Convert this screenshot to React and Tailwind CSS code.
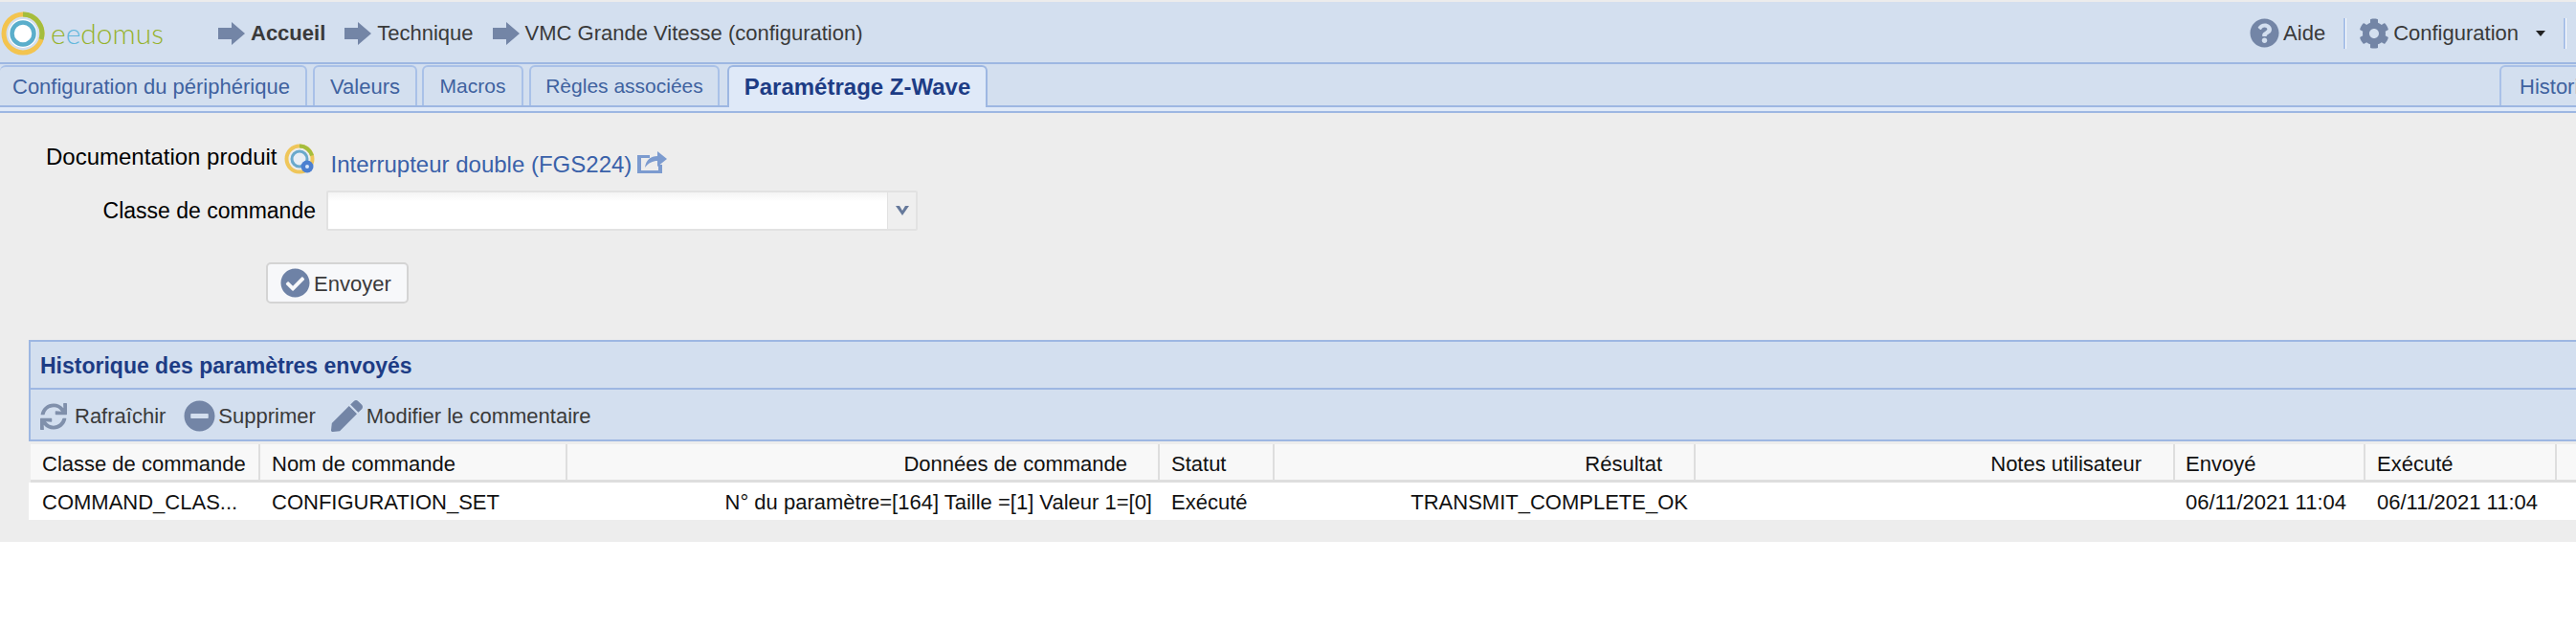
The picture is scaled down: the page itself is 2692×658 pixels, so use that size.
import { FaCheckCircle, FaCog, FaMinusCircle, FaPen, FaQuestionCircle, FaSync } from 'react-icons/fa';

const tabs = [
  { label: 'Configuration du périphérique', className: 'w-[321px] pl-[13px] border-l-0' },
  { label: 'Valeurs', className: 'w-[109px] ml-[6px] justify-center' },
  { label: 'Macros', className: 'w-[106px] ml-[5px] justify-center text-[21px]' },
  { label: 'Règles associées', className: 'w-[199px] ml-[6px] justify-center text-[21px]' },
];

const columns = [
  { head: 'Classe de commande', cell: 'COMMAND_CLAS...', width: 'w-[240px]', headPad: 'pl-[12px]', cellPad: 'pl-[12px]' },
  { head: 'Nom de commande', cell: 'CONFIGURATION_SET', width: 'w-[321px]', headPad: 'pl-[12px]', cellPad: 'pl-[12px]' },
  { head: 'Données de commande', cell: 'N° du paramètre=[164] Taille =[1] Valeur 1=[0]', width: 'w-[619px]', headPad: 'pr-[32px] justify-end', cellPad: 'pr-[8px] justify-end' },
  { head: 'Statut', cell: 'Exécuté', width: 'w-[120px]', headPad: 'pl-[12px]', cellPad: 'pl-[12px]' },
  { head: 'Résultat', cell: 'TRANSMIT_COMPLETE_OK', width: 'w-[440px]', headPad: 'pr-[33px] justify-end', cellPad: 'pr-[8px] justify-end' },
  { head: 'Notes utilisateur', cell: '', width: 'w-[501px]', headPad: 'pr-[33px] justify-end', cellPad: '' },
  { head: 'Envoyé', cell: '06/11/2021 11:04', width: 'w-[199px]', headPad: 'pl-[11px]', cellPad: 'pl-[11px]' },
  { head: 'Exécuté', cell: '06/11/2021 11:04', width: 'w-[200px]', headPad: 'pl-[12px]', cellPad: 'pl-[12px]' },
];

function Arrow() {
  return (
    <svg width="28" height="24" viewBox="0 0 28 24" className="shrink-0">
      <path d="M0 6h14V0l14 12-14 12v-6H0z" fill="#7385a6" />
    </svg>
  );
}

function Logo() {
  return (
    <svg width="46" height="46" viewBox="0 0 46 46" className="shrink-0">
      <circle cx="23" cy="23" r="20" fill="none" stroke="#f3c44f" strokeWidth="5" />
      <path d="M23 3a20 20 0 0 1 19 26" fill="none" stroke="#a4bd3d" strokeWidth="5" />
      <circle cx="23" cy="23" r="15" fill="#ffffff" />
      <circle cx="23" cy="23" r="11.5" fill="none" stroke="#5aaecb" strokeWidth="4.5" />
    </svg>
  );
}

function DocIcon() {
  return (
    <svg width="33" height="33" viewBox="0 0 33 33" className="shrink-0">
      <circle cx="16" cy="16" r="13.5" fill="none" stroke="#efc65a" strokeWidth="4" />
      <path d="M16 2.5a13.5 13.5 0 0 1 13 10" fill="none" stroke="#a4bd3d" strokeWidth="4" />
      <circle cx="16" cy="16" r="8" fill="#e8eef5" stroke="#6aa9cc" strokeWidth="3" />
      <circle cx="24" cy="24" r="6.5" fill="#4c7fd0" />
      <circle cx="24" cy="24" r="2" fill="#dbe7fa" />
    </svg>
  );
}

function ShareIcon() {
  return (
    <svg width="32" height="28" viewBox="0 0 32 28" className="shrink-0">
      <path d="M0 8h13v3H4v13h18v-6h4v9H0z" fill="#7c9bcf" />
      <path d="M8 21c1-8 6-12 13-12V4l10 8-10 8v-6c-5 0-9 2-13 7z" fill="#7c9bcf" />
    </svg>
  );
}

export default function App() {
  return (
    <div className="w-[2692px] h-[658px] overflow-hidden bg-white font-['Liberation_Sans',Arial,sans-serif] text-[22px]">
      {/* top bar */}
      <div className="h-[2px] bg-[#ececec]" />
      <div className="h-[63px] pt-[2px] bg-[#d3dfef] flex items-center text-[#3a3a3a]">
        <div className="flex items-center w-[228px] pl-[1px]">
          <Logo />
          <span className="ml-[6px] font-['Lato',sans-serif] font-light text-[30px] text-[#96b22c]">
            e<span className="text-[#62b7dc]">e</span>domus
          </span>
        </div>
        <Arrow />
        <span className="ml-[6px] font-bold">Accueil</span>
        <div className="ml-[20px]"><Arrow /></div>
        <span className="ml-[6px]">Technique</span>
        <div className="ml-[20px]"><Arrow /></div>
        <span className="ml-[6px]">VMC Grande Vitesse (configuration)</span>

        <div className="ml-auto flex items-center">
          <FaQuestionCircle className="text-[#7385a6] w-[31px] h-[31px]" />
          <span className="ml-[4px]">Aide</span>
          <div className="ml-[19px] w-[3px] h-[32px] bg-[#a9c1e8] border-r border-white" />
          <FaCog className="ml-[13px] text-[#7385a6] w-[32px] h-[32px]" />
          <span className="ml-[4px]">Configuration</span>
          <svg width="10" height="6" viewBox="0 0 10 6" className="ml-[18px]"><path d="M0 0h10L5 6z" fill="#222222" /></svg>
          <div className="ml-[19px] mr-[10px] w-[3px] h-[32px] bg-[#a9c1e8] border-r border-white" />
        </div>
      </div>

      {/* tabs */}
      <div className="h-[45px] bg-[#d3dfef] border-t-2 border-[#9db7e2] flex items-end">
        {tabs.map((tab) => (
          <div
            key={tab.label}
            className={`h-[42px] flex items-center border-t-2 border-x-2 border-[#a9c1e8] rounded-t-[6px] text-[#3f629f] ${tab.className}`}
          >
            {tab.label}
          </div>
        ))}
        <div className="h-[44px] w-[272px] ml-[8px] -mb-[2px] z-10 flex items-center justify-center border-t-2 border-x-2 border-[#9db7e2] rounded-t-[6px] bg-[#dfe9f8] font-bold text-[24px] text-[#1d3c85]">
          Paramétrage Z-Wave
        </div>
        <div className="ml-auto h-[42px] w-[80px] overflow-hidden flex items-center pl-[19px] border-t-2 border-l-2 border-[#a9c1e8] rounded-tl-[6px] text-[#3f629f]">
          Historique
        </div>
      </div>
      <div className="h-[8px] bg-[#dfe9f8] border-y-2 border-[#9db7e2] box-border" />

      {/* form + history */}
      <div className="h-[448px] bg-[#ededed] pt-[32px]">
        <div className="flex items-start h-[32px] pl-[48px] text-black text-[24px]">
          <span className="mt-[1px] leading-[26px]">Documentation produit</span>
          <div className="ml-[8px]"><DocIcon /></div>
          <a className="ml-[15px] mt-[8px] leading-[28px] text-[#3a61a9]">Interrupteur double (FGS224)</a>
          <div className="ml-[6px] mt-[4px]"><ShareIcon /></div>
        </div>

        <div className="flex items-center mt-[17px] h-[42px]">
          <span className="w-[330px] text-right text-black text-[23px]">Classe de commande</span>
          <div className="ml-[11px] w-[618px] h-[42px] flex border-2 border-[#e2e2e2] rounded-[2px]">
            <div className="w-[584px] bg-gradient-to-b from-[#f4f4f4] to-white to-[25%]" />
            <div className="flex-1 bg-[#efefef] flex items-center justify-center border-l border-[#e2e2e2]">
              <svg width="16" height="12" viewBox="0 0 16 12"><path d="M1 1h4l3 5 3-5h4L8 11z" fill="#66799b" /></svg>
            </div>
          </div>
        </div>

        <div className="ml-[278px] mt-[33px] w-[149px] h-[43px] flex items-center pl-[13px] border-2 border-[#d4d4d4] rounded-[5px] bg-[#f7f8fa] text-[#3a3a3a]">
          <FaCheckCircle className="text-[#6e82a6] w-[31px] h-[31px]" />
          <span className="ml-[4px] pt-[2px]">Envoyer</span>
        </div>

        <div className="ml-[30px] mt-[38px]">
          <div className="h-[50px] pt-[3px] bg-[#d3dfef] border-t-2 border-l-2 border-[#9db7e2] flex items-center pl-[10px] font-bold text-[23px] text-[#1d3c85]">
            Historique des paramètres envoyés
          </div>
          <div className="h-[56px] pt-[3px] bg-[#d3dfef] border-y-2 border-l-2 border-[#9db7e2] flex items-center pl-[10px] text-[#3a3a3a]">
            <FaSync className="text-[#8090ab] w-[28px] h-[28px]" />
            <span className="ml-[8px]">Rafraîchir</span>
            <FaMinusCircle className="ml-[19px] text-[#7385a6] w-[33px] h-[33px]" />
            <span className="ml-[3px]">Supprimer</span>
            <FaPen className="ml-[16px] text-[#7385a6] w-[33px] h-[33px]" />
            <span className="ml-[4px]">Modifier le commentaire</span>
          </div>

          <div className="flex h-[43px] pt-[3px] bg-[#ededed] pl-[2px]">
            {columns.map((col) => (
              <div
                key={col.head}
                className={`h-[40px] pt-[3px] flex items-center bg-[#f8f8f8] border-b-[3px] border-r-2 border-[#dedede] text-[#111111] ${col.width} ${col.headPad}`}
              >
                {col.head}
              </div>
            ))}
            <div className="h-[40px] flex-1 bg-[#f8f8f8] border-b-[3px] border-[#dedede]" />
          </div>
          <div className="flex h-[39px] pt-[1px] bg-white pl-[2px] text-[#111111]">
            {columns.map((col) => (
              <div
                key={col.head}
                className={`h-full flex items-center whitespace-nowrap ${col.width} ${col.cellPad}`}
              >
                {col.cell}
              </div>
            ))}
          </div>
        </div>
      </div>
    </div>
  );
}
